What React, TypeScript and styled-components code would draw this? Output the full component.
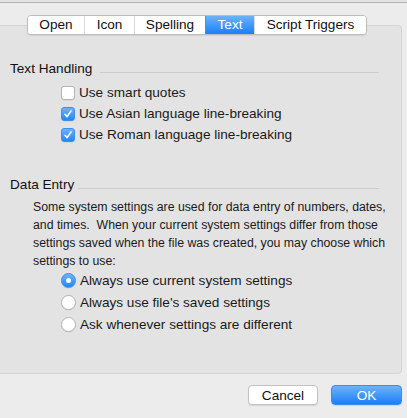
import styled, { createGlobalStyle } from 'styled-components'

const Global = createGlobalStyle`
  html, body {
    margin: 0;
    padding: 0;
    background: #ececec;
  }
  body {
    font-family: "Liberation Sans", Arial, sans-serif;
    font-size: 13.6px;
    color: #1a1a1a;
  }
`

const Window = styled.div`
  width: 407px;
  height: 418px;
  overflow: hidden;
  display: flex;
  flex-direction: column;
`

const TopEdge = styled.div`
  height: 2px;
  background: #e4e4e4;
  border-bottom: 1px solid #b3b3b3;
`

const TabBar = styled.div`
  display: flex;
  margin: 12px 0 -10px 27px;
  position: relative;
  z-index: 1;
`

const TabGroup = styled.div`
  display: flex;
  height: 20px;
  box-sizing: border-box;
  border: 1px solid #bdbdbd;
  border-radius: 4px;
  background: #fff;
  overflow: hidden;
  box-shadow: 0 1px 1px rgba(0, 0, 0, 0.08);
`

const Tab = styled.div<{ $active?: boolean; $w: number }>`
  width: ${p => p.$w}px;
  display: flex;
  align-items: center;
  justify-content: center;
  line-height: 18px;
  color: ${p => (p.$active ? '#fff' : '#111')};
  background: ${p => (p.$active ? 'linear-gradient(#6cb2fb, #1a7ff8)' : '#fff')};
  border-left: 1px solid ${p => (p.$active ? '#3f93f5' : '#dadada')};
  box-sizing: border-box;
  &:first-child {
    border-left: none;
  }
`

const Panel = styled.div`
  height: 349px;
  box-sizing: border-box;
  margin: 0 5px 0 -6px;
  border: 1px solid #d4d4d4;
  border-radius: 4px;
  background: #e3e3e3;
  padding: 35px 0 0 15px;
`

const Section = styled.div<{ $gap?: number }>`
  margin-top: ${p => p.$gap ?? 0}px;
`

const Heading = styled.div`
  display: flex;
  align-items: flex-end;
  line-height: 16px;
  color: #111;
`

const Rule = styled.div<{ $from: number }>`
  flex: 1;
  height: 1px;
  background: #cdcdcd;
  margin: 0 22px 4px ${p => p.$from}px;
`

const Options = styled.div<{ $top: number; $row: number }>`
  display: flex;
  flex-direction: column;
  margin: ${p => p.$top}px 0 0 51px;
  & > * {
    height: ${p => p.$row}px;
  }
`

const Option = styled.label`
  display: flex;
  align-items: center;
  gap: 4px;
  color: #1a1a1a;
`

const Box = styled.span<{ $on?: boolean }>`
  width: 14px;
  height: 14px;
  box-sizing: border-box;
  border-radius: 3px;
  display: flex;
  align-items: center;
  justify-content: center;
  background: ${p => (p.$on ? 'linear-gradient(#6db3fb, #2486f8)' : '#fff')};
  border: 1px solid ${p => (p.$on ? '#3b8ff2' : '#b4b4b4')};
  box-shadow: 0 0.5px 0.5px rgba(0, 0, 0, 0.1);
`

const Radio = styled.span<{ $on?: boolean }>`
  width: 15px;
  height: 15px;
  box-sizing: border-box;
  border-radius: 50%;
  display: flex;
  align-items: center;
  justify-content: center;
  background: ${p => (p.$on ? 'linear-gradient(#6db3fb, #2486f8)' : '#fff')};
  border: 1px solid ${p => (p.$on ? '#3b8ff2' : '#b4b4b4')};
  box-shadow: 0 0.5px 0.5px rgba(0, 0, 0, 0.1);
  &::after {
    content: '';
    display: ${p => (p.$on ? 'block' : 'none')};
    width: 5px;
    height: 5px;
    border-radius: 50%;
    background: #fff;
  }
`

const Text = styled.p`
  margin: 5px 0 0 23px;
  font-size: 12.3px;
  line-height: 18px;
  color: #1a1a1a;
  white-space: nowrap;
`

const Footer = styled.div`
  display: flex;
  justify-content: flex-end;
  gap: 13px;
  margin: 11px 5px 0 0;
`

const Button = styled.button<{ $primary?: boolean; $w: number }>`
  width: ${p => p.$w}px;
  height: 20px;
  padding: 0;
  font: inherit;
  border-radius: 4px;
  color: ${p => (p.$primary ? '#fff' : '#111')};
  background: ${p => (p.$primary ? 'linear-gradient(#6cb3fb, #1b7ff6)' : '#fff')};
  border: 1px solid ${p => (p.$primary ? '#3a8cf0' : '#c2c2c2')};
  box-shadow: 0 1px 1px rgba(0, 0, 0, 0.1);
`

function Check() {
  return (
    <svg width="10" height="10" viewBox="0 0 10 10">
      <path d="M2 5.3 L4.1 7.6 L8 2" fill="none" stroke="#fff" strokeWidth="1.6" strokeLinecap="round" strokeLinejoin="round" />
    </svg>
  )
}

const tabs = [
  { label: 'Open', w: 56 },
  { label: 'Icon', w: 50 },
  { label: 'Spelling', w: 71 },
  { label: 'Text', w: 49, active: true },
  { label: 'Script Triggers', w: 112 },
]

export default function App() {
  return (
    <Window>
      <Global />
      <TopEdge />
      <TabBar>
        <TabGroup>
          {tabs.map(t => (
            <Tab key={t.label} $w={t.w} $active={t.active}>
              {t.label}
            </Tab>
          ))}
        </TabGroup>
      </TabBar>
      <Panel>
        <Section>
          <Heading>
            Text Handling
            <Rule $from={8} />
          </Heading>
          <Options $top={5} $row={21}>
            <Option>
              <Box />
              Use smart quotes
            </Option>
            <Option>
              <Box $on>
                <Check />
              </Box>
              Use Asian language line-breaking
            </Option>
            <Option>
              <Box $on>
                <Check />
              </Box>
              Use Roman language line-breaking
            </Option>
          </Options>
        </Section>
        <Section $gap={32}>
          <Heading>
            Data Entry
            <Rule $from={4} />
          </Heading>
          <Text>
            Some system settings are used for data entry of numbers, dates,
            <br />
            and times.{'\u00a0 '}When your current system settings differ from those
            <br />
            settings saved when the file was created, you may choose which
            <br />
            settings to use:
          </Text>
          <Options $top={-1} $row={22}>
            <Option>
              <Radio $on />
              Always use current system settings
            </Option>
            <Option>
              <Radio />
              Always use file's saved settings
            </Option>
            <Option>
              <Radio />
              Ask whenever settings are different
            </Option>
          </Options>
        </Section>
      </Panel>
      <Footer>
        <Button $w={70}>Cancel</Button>
        <Button $w={71} $primary>
          OK
        </Button>
      </Footer>
    </Window>
  )
}
